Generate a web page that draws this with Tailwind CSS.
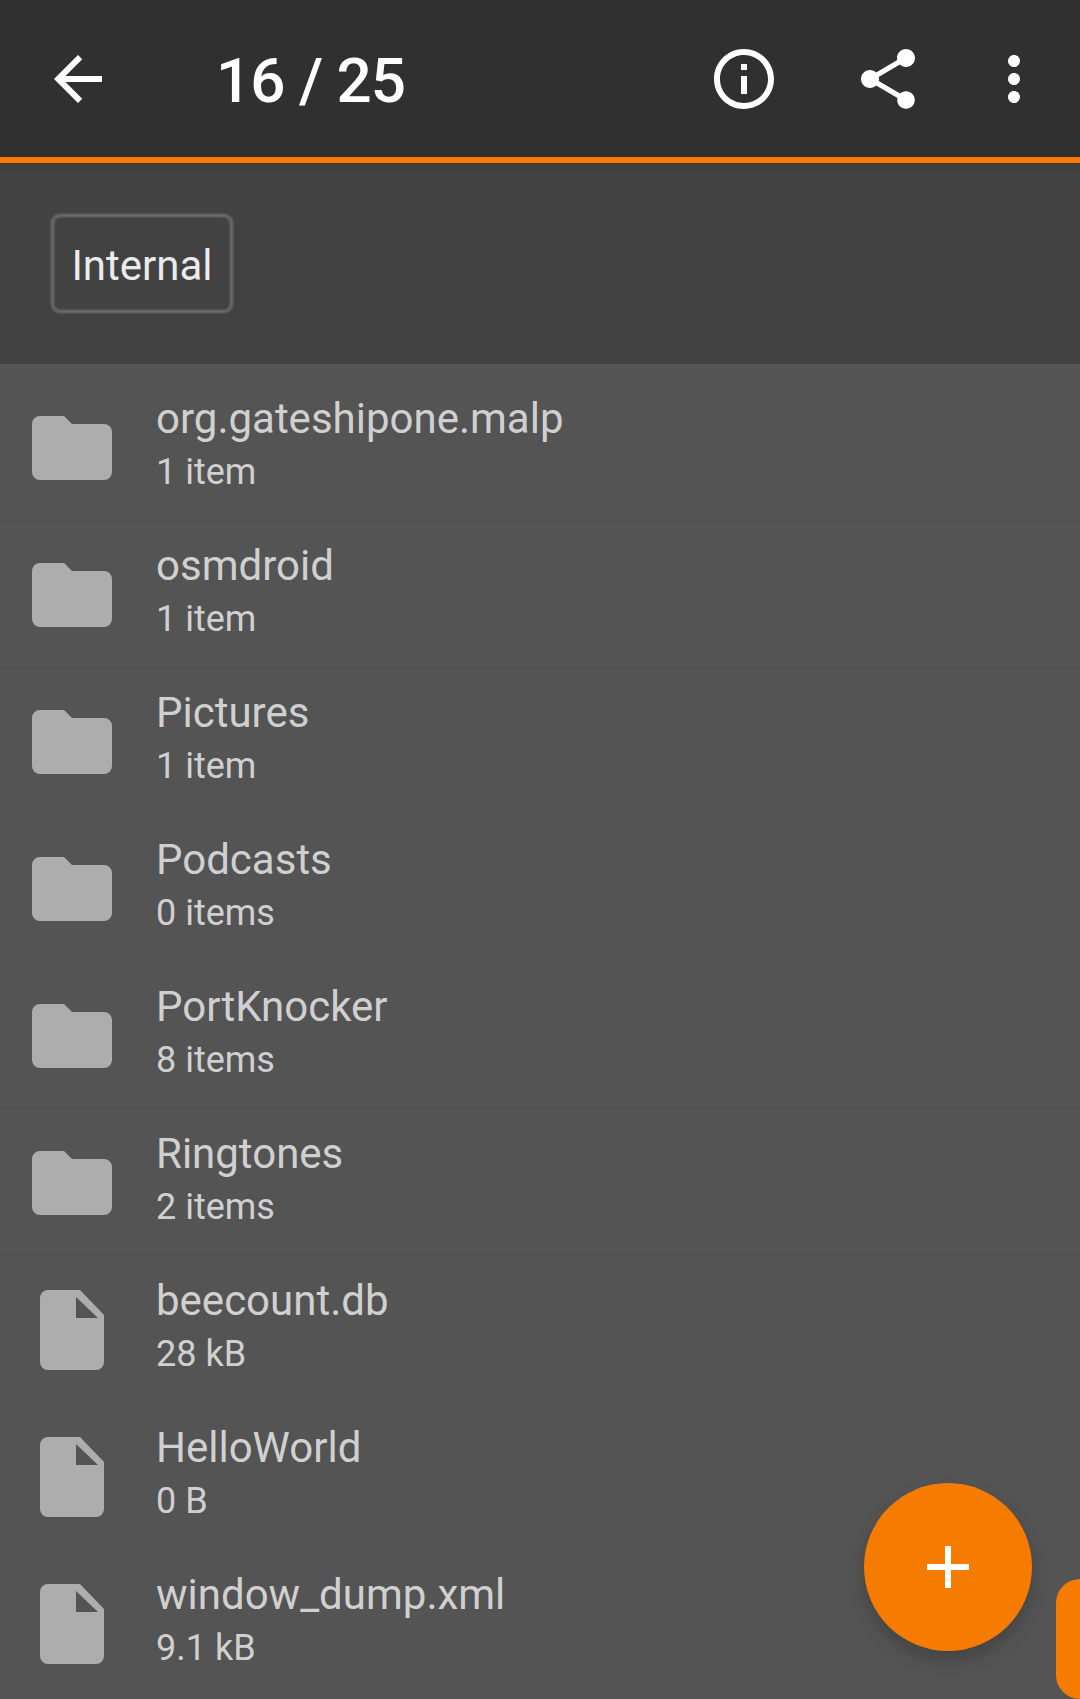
<!doctype html>
<html><head><meta charset="utf-8"><script src="https://cdn.jsdelivr.net/npm/@tailwindcss/browser@4"></script></head>
<body class="m-0">
<div class="relative w-[1080px] h-[1699px] overflow-hidden bg-[#545454] font-['Roboto',sans-serif]">
  <header class="h-[163px] bg-[#303030] border-b-[6px] border-[#f57c00] flex items-center relative">
    <svg class="absolute left-[42px] top-[43px] w-[72px] h-[72px]" viewBox="0 0 24 24" fill="#fff"><path d="M20 11H7.83l5.59-5.59L12 4l-8 8 8 8 1.41-1.41L7.83 13H20v-2z"/></svg>
    <div class="absolute left-[216px] top-[45px] text-[62px] leading-[72px] font-medium text-white tracking-[-1px]">16 / 25</div>
    <svg class="absolute left-[708px] top-[43px] w-[72px] h-[72px]" viewBox="0 0 24 24" fill="#fff"><path d="M11 7h2v2h-2zm0 4h2v6h-2zm1-9C6.48 2 2 6.48 2 12s4.48 10 10 10 10-4.48 10-10S17.52 2 12 2zm0 18c-4.41 0-8-3.59-8-8s3.59-8 8-8 8 3.59 8 8-3.59 8-8 8z"/></svg>
    <svg class="absolute left-[852px] top-[43px] w-[72px] h-[72px]" viewBox="0 0 24 24" fill="#fff"><path d="M18 16.08c-.76 0-1.44.3-1.96.77L8.91 12.7c.05-.23.09-.46.09-.7s-.04-.47-.09-.7l7.05-4.11c.54.5 1.25.81 2.04.81 1.66 0 3-1.34 3-3s-1.34-3-3-3-3 1.34-3 3c0 .24.04.47.09.7L8.04 9.81C7.5 9.31 6.79 9 6 9c-1.66 0-3 1.34-3 3s1.34 3 3 3c.79 0 1.5-.31 2.04-.81l7.12 4.16c-.05.21-.08.43-.08.65 0 1.61 1.31 2.92 2.92 2.92s2.92-1.31 2.92-2.92-1.31-2.92-2.92-2.92z"/></svg>
    <svg class="absolute left-[978px] top-[43px] w-[72px] h-[72px]" viewBox="0 0 24 24" fill="#fff"><path d="M12 8c1.1 0 2-.9 2-2s-.9-2-2-2-2 .9-2 2 .9 2 2 2zm0 2c-1.1 0-2 .9-2 2s.9 2 2 2 2-.9 2-2-.9-2-2-2zm0 6c-1.1 0-2 .9-2 2s.9 2 2 2 2-.9 2-2-.9-2-2-2z"/></svg>
  </header>
  <div class="h-[201px] bg-[#424242] relative pl-[51px] pt-[51px]">
    <div class="absolute inset-x-0 top-0 h-[12px] bg-gradient-to-b from-black/10 to-transparent"></div>
    <div class="relative w-[182px] h-[99px] flex items-center justify-center text-[#ebebeb] text-[42px] pt-[3px]">
      <span class="absolute inset-0 border-[3px] border-[#707070] rounded-[9px] blur-[1px]"></span>
      Internal
    </div>
  </div>
  <div class="h-[10px] bg-[#555555] border-b border-[#525252]"></div>
  <ul>
    <li class="h-[147px] flex border-b-[1px] border-[#505050] pl-[32px]"><svg class="w-[80px] h-[64px] mt-[42px] shrink-0" viewBox="0 0 80 64" fill="#adadad"><path d="M8 0h24l8 8h32a8 8 0 0 1 8 8v40a8 8 0 0 1-8 8H8a8 8 0 0 1-8-8V8a8 8 0 0 1 8-8z"/></svg><div class="ml-[44px] pt-[17px]"><div class="text-[42px] leading-[55px] text-[#d0d0d0]">org.gateshipone.malp</div><div class="text-[36px] leading-[50px] text-[#d0d0d0] mt-[1px]">1 item</div></div></li>
    <li class="h-[147px] flex border-b-[1px] border-[#505050] pl-[32px]"><svg class="w-[80px] h-[64px] mt-[42px] shrink-0" viewBox="0 0 80 64" fill="#adadad"><path d="M8 0h24l8 8h32a8 8 0 0 1 8 8v40a8 8 0 0 1-8 8H8a8 8 0 0 1-8-8V8a8 8 0 0 1 8-8z"/></svg><div class="ml-[44px] pt-[17px]"><div class="text-[42px] leading-[55px] text-[#d0d0d0]">osmdroid</div><div class="text-[36px] leading-[50px] text-[#d0d0d0] mt-[1px]">1 item</div></div></li>
    <li class="h-[147px] flex border-b-[1px] border-[#505050] pl-[32px]"><svg class="w-[80px] h-[64px] mt-[42px] shrink-0" viewBox="0 0 80 64" fill="#adadad"><path d="M8 0h24l8 8h32a8 8 0 0 1 8 8v40a8 8 0 0 1-8 8H8a8 8 0 0 1-8-8V8a8 8 0 0 1 8-8z"/></svg><div class="ml-[44px] pt-[17px]"><div class="text-[42px] leading-[55px] text-[#d0d0d0]">Pictures</div><div class="text-[36px] leading-[50px] text-[#d0d0d0] mt-[1px]">1 item</div></div></li>
    <li class="h-[147px] flex border-b-[1px] border-[#505050] pl-[32px]"><svg class="w-[80px] h-[64px] mt-[42px] shrink-0" viewBox="0 0 80 64" fill="#adadad"><path d="M8 0h24l8 8h32a8 8 0 0 1 8 8v40a8 8 0 0 1-8 8H8a8 8 0 0 1-8-8V8a8 8 0 0 1 8-8z"/></svg><div class="ml-[44px] pt-[17px]"><div class="text-[42px] leading-[55px] text-[#d0d0d0]">Podcasts</div><div class="text-[36px] leading-[50px] text-[#d0d0d0] mt-[1px]">0 items</div></div></li>
    <li class="h-[147px] flex border-b-[1px] border-[#505050] pl-[32px]"><svg class="w-[80px] h-[64px] mt-[42px] shrink-0" viewBox="0 0 80 64" fill="#adadad"><path d="M8 0h24l8 8h32a8 8 0 0 1 8 8v40a8 8 0 0 1-8 8H8a8 8 0 0 1-8-8V8a8 8 0 0 1 8-8z"/></svg><div class="ml-[44px] pt-[17px]"><div class="text-[42px] leading-[55px] text-[#d0d0d0]">PortKnocker</div><div class="text-[36px] leading-[50px] text-[#d0d0d0] mt-[1px]">8 items</div></div></li>
    <li class="h-[147px] flex border-b-[1px] border-[#505050] pl-[32px]"><svg class="w-[80px] h-[64px] mt-[42px] shrink-0" viewBox="0 0 80 64" fill="#adadad"><path d="M8 0h24l8 8h32a8 8 0 0 1 8 8v40a8 8 0 0 1-8 8H8a8 8 0 0 1-8-8V8a8 8 0 0 1 8-8z"/></svg><div class="ml-[44px] pt-[17px]"><div class="text-[42px] leading-[55px] text-[#d0d0d0]">Ringtones</div><div class="text-[36px] leading-[50px] text-[#d0d0d0] mt-[1px]">2 items</div></div></li>
    <li class="h-[147px] flex border-b-[1px] border-[#505050] pl-[40px]"><svg class="w-[64px] h-[80px] mt-[34px] shrink-0" viewBox="0 0 64 80" fill="#adadad"><path fill-rule="evenodd" d="M8 0h32l24 25v47a8 8 0 0 1-8 8H8a8 8 0 0 1-8-8V8a8 8 0 0 1 8-8zm28 7v21h22z"/></svg><div class="ml-[52px] pt-[17px]"><div class="text-[42px] leading-[55px] text-[#d0d0d0]">beecount.db</div><div class="text-[36px] leading-[50px] text-[#d0d0d0] mt-[1px]">28 kB</div></div></li>
    <li class="h-[147px] flex border-b-[1px] border-[#505050] pl-[40px]"><svg class="w-[64px] h-[80px] mt-[34px] shrink-0" viewBox="0 0 64 80" fill="#adadad"><path fill-rule="evenodd" d="M8 0h32l24 25v47a8 8 0 0 1-8 8H8a8 8 0 0 1-8-8V8a8 8 0 0 1 8-8zm28 7v21h22z"/></svg><div class="ml-[52px] pt-[17px]"><div class="text-[42px] leading-[55px] text-[#d0d0d0]">HelloWorld</div><div class="text-[36px] leading-[50px] text-[#d0d0d0] mt-[1px]">0 B</div></div></li>
    <li class="h-[147px] flex border-b-[1px] border-[#505050] pl-[40px]"><svg class="w-[64px] h-[80px] mt-[34px] shrink-0" viewBox="0 0 64 80" fill="#adadad"><path fill-rule="evenodd" d="M8 0h32l24 25v47a8 8 0 0 1-8 8H8a8 8 0 0 1-8-8V8a8 8 0 0 1 8-8zm28 7v21h22z"/></svg><div class="ml-[52px] pt-[17px]"><div class="text-[42px] leading-[55px] text-[#d0d0d0]">window_dump.xml</div><div class="text-[36px] leading-[50px] text-[#d0d0d0] mt-[1px]">9.1 kB</div></div></li>
  </ul>
  <button class="absolute left-[864px] top-[1483px] w-[168px] h-[168px] rounded-full bg-[#f57c00] shadow-[0_9px_18px_rgba(0,0,0,0.2)] flex items-center justify-center">
    <svg class="w-[42px] h-[42px]" viewBox="0 0 42 42" fill="#fff"><path d="M18 0h6v18h18v6H24v18h-6V24H0v-6h18z"/></svg>
  </button>
  <div class="absolute left-[1056px] top-[1579px] w-[40px] h-[120px] rounded-l-[24px] bg-[#f57c00]"></div>
</div>
</body></html>
